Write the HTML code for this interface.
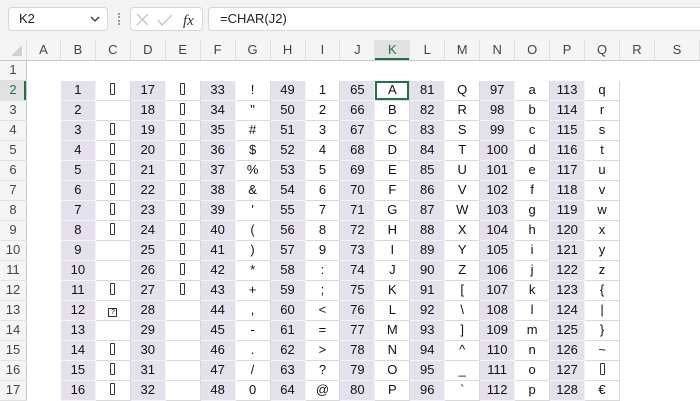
<!DOCTYPE html>
<html><head><style>
body{margin:0;width:700px;height:400px;overflow:hidden;background:#fff;font-family:"Liberation Sans",Arial,sans-serif;position:relative}
.top{position:absolute;left:0;top:0;width:700px;height:40px;background:#f3f3f3}
.nb{position:absolute;left:8px;top:7px;width:100px;height:24px;background:#fff;border:1px solid #d6d6d6;border-radius:4px;box-sizing:border-box;font-size:13px;line-height:22px;padding-left:10px;color:#222}
.fx{position:absolute;left:130px;top:7px;width:73px;height:24px;background:#fff;border:1px solid #d6d6d6;border-radius:4px;box-sizing:border-box}
.fb{position:absolute;left:208px;top:7px;width:500px;height:24px;background:#fff;border:1px solid #d6d6d6;border-radius:4px;box-sizing:border-box;font-size:13px;line-height:22px;padding-left:11px;color:#222}
table{position:absolute;left:0;top:40px;border-collapse:collapse;table-layout:fixed}
tr{height:20px}
td{height:19px;line-height:18px;padding:0;text-align:center;font-size:13px;color:#111;border:1px solid transparent;white-space:nowrap;overflow:hidden;box-sizing:border-box}
tr.h td{background:#f5f5f5;color:#444;font-size:13px;border:none;border-bottom:1px solid #c8c8c8;border-right:1px solid #e0e0e0}
td.rh{background:#f5f5f5;color:#444;border:none;border-right:1px solid #c8c8c8;border-bottom:1px solid #e0e0e0}
td.s{background:#e4e0ec;border:1px solid #f4f4f8}
td.w{background:#fff;border:1px solid #d9d9d9}
td.sel{box-shadow:inset 0 0 0 2px #217346}
.b{display:inline-block;width:3px;height:10px;border:1px solid #333;border-radius:1px;vertical-align:-1px}
.q{display:inline-block;width:7px;height:7px;border:1px solid #333;font-size:7px;line-height:7px;vertical-align:0}
</style></head><body>
<div class="top">
<div class="nb">K2<svg style="position:absolute;right:7px;top:8px" width="10" height="7"><path d="M1 1l4 4 4-4" stroke="#333" fill="none" stroke-width="1.3"/></svg></div>
<div style="position:absolute;left:118px;top:13px;width:2px;height:12px;border-left:2px dotted #999"></div>
<div class="fx"><svg width="73" height="24"><path d="M6 6l11 11M17 6L6 17" stroke="#bbb" stroke-width="1.2"/><path d="M27 12l4 5 10-10" stroke="#bbb" stroke-width="1.2" fill="none"/><text x="52" y="17" font-family="Liberation Serif" font-style="italic" font-size="15" fill="#333">fx</text></svg></div>
<div class="fb">=CHAR(J2)</div>
</div>
<table>
<colgroup><col style="width:26px"><col style="width:34px"><col span="17" style="width:35px"><col style="width:45px"></colgroup>
<tr class="h"><td style="background:#f5f5f5"><svg style="display:block" width="26" height="18"><path d="M22 4L22 15L11 15Z" fill="#d0d0d0"/></svg></td><td>A</td><td>B</td><td>C</td><td>D</td><td>E</td><td>F</td><td>G</td><td>H</td><td>I</td><td>J</td><td style="background:#e1e1e1;color:#217346;box-shadow:inset 0 -2px #217346">K</td><td>L</td><td>M</td><td>N</td><td>O</td><td>P</td><td>Q</td><td>R</td><td>S</td></tr>
<tr><td class="rh">1</td><td colspan="19"></td></tr>
<tr><td class="rh" style="background:#e1e1e1;color:#217346;box-shadow:inset -2px 0 #217346">2</td><td></td><td class="s">1</td><td class="w"><i class="b"></i></td><td class="s">17</td><td class="w"><i class="b"></i></td><td class="s">33</td><td class="w">!</td><td class="s">49</td><td class="w">1</td><td class="s">65</td><td class="w sel">A</td><td class="s">81</td><td class="w">Q</td><td class="s">97</td><td class="w">a</td><td class="s">113</td><td class="w">q</td><td></td><td></td></tr>
<tr><td class="rh">3</td><td></td><td class="s">2</td><td class="w"></td><td class="s">18</td><td class="w"><i class="b"></i></td><td class="s">34</td><td class="w">"</td><td class="s">50</td><td class="w">2</td><td class="s">66</td><td class="w">B</td><td class="s">82</td><td class="w">R</td><td class="s">98</td><td class="w">b</td><td class="s">114</td><td class="w">r</td><td></td><td></td></tr>
<tr><td class="rh">4</td><td></td><td class="s">3</td><td class="w"><i class="b"></i></td><td class="s">19</td><td class="w"><i class="b"></i></td><td class="s">35</td><td class="w">#</td><td class="s">51</td><td class="w">3</td><td class="s">67</td><td class="w">C</td><td class="s">83</td><td class="w">S</td><td class="s">99</td><td class="w">c</td><td class="s">115</td><td class="w">s</td><td></td><td></td></tr>
<tr><td class="rh">5</td><td></td><td class="s">4</td><td class="w"><i class="b"></i></td><td class="s">20</td><td class="w"><i class="b"></i></td><td class="s">36</td><td class="w">$</td><td class="s">52</td><td class="w">4</td><td class="s">68</td><td class="w">D</td><td class="s">84</td><td class="w">T</td><td class="s">100</td><td class="w">d</td><td class="s">116</td><td class="w">t</td><td></td><td></td></tr>
<tr><td class="rh">6</td><td></td><td class="s">5</td><td class="w"><i class="b"></i></td><td class="s">21</td><td class="w"><i class="b"></i></td><td class="s">37</td><td class="w">%</td><td class="s">53</td><td class="w">5</td><td class="s">69</td><td class="w">E</td><td class="s">85</td><td class="w">U</td><td class="s">101</td><td class="w">e</td><td class="s">117</td><td class="w">u</td><td></td><td></td></tr>
<tr><td class="rh">7</td><td></td><td class="s">6</td><td class="w"><i class="b"></i></td><td class="s">22</td><td class="w"><i class="b"></i></td><td class="s">38</td><td class="w">&amp;</td><td class="s">54</td><td class="w">6</td><td class="s">70</td><td class="w">F</td><td class="s">86</td><td class="w">V</td><td class="s">102</td><td class="w">f</td><td class="s">118</td><td class="w">v</td><td></td><td></td></tr>
<tr><td class="rh">8</td><td></td><td class="s">7</td><td class="w"><i class="b"></i></td><td class="s">23</td><td class="w"><i class="b"></i></td><td class="s">39</td><td class="w">'</td><td class="s">55</td><td class="w">7</td><td class="s">71</td><td class="w">G</td><td class="s">87</td><td class="w">W</td><td class="s">103</td><td class="w">g</td><td class="s">119</td><td class="w">w</td><td></td><td></td></tr>
<tr><td class="rh">9</td><td></td><td class="s">8</td><td class="w"><i class="b"></i></td><td class="s">24</td><td class="w"><i class="b"></i></td><td class="s">40</td><td class="w">(</td><td class="s">56</td><td class="w">8</td><td class="s">72</td><td class="w">H</td><td class="s">88</td><td class="w">X</td><td class="s">104</td><td class="w">h</td><td class="s">120</td><td class="w">x</td><td></td><td></td></tr>
<tr><td class="rh">10</td><td></td><td class="s">9</td><td class="w"></td><td class="s">25</td><td class="w"><i class="b"></i></td><td class="s">41</td><td class="w">)</td><td class="s">57</td><td class="w">9</td><td class="s">73</td><td class="w">I</td><td class="s">89</td><td class="w">Y</td><td class="s">105</td><td class="w">i</td><td class="s">121</td><td class="w">y</td><td></td><td></td></tr>
<tr><td class="rh">11</td><td></td><td class="s">10</td><td class="w"></td><td class="s">26</td><td class="w"><i class="b"></i></td><td class="s">42</td><td class="w">*</td><td class="s">58</td><td class="w">:</td><td class="s">74</td><td class="w">J</td><td class="s">90</td><td class="w">Z</td><td class="s">106</td><td class="w">j</td><td class="s">122</td><td class="w">z</td><td></td><td></td></tr>
<tr><td class="rh">12</td><td></td><td class="s">11</td><td class="w"><i class="b"></i></td><td class="s">27</td><td class="w"><i class="b"></i></td><td class="s">43</td><td class="w">+</td><td class="s">59</td><td class="w">;</td><td class="s">75</td><td class="w">K</td><td class="s">91</td><td class="w">[</td><td class="s">107</td><td class="w">k</td><td class="s">123</td><td class="w">{</td><td></td><td></td></tr>
<tr><td class="rh">13</td><td></td><td class="s">12</td><td class="w"><i class="q">?</i></td><td class="s">28</td><td class="w"></td><td class="s">44</td><td class="w">,</td><td class="s">60</td><td class="w">&lt;</td><td class="s">76</td><td class="w">L</td><td class="s">92</td><td class="w">\</td><td class="s">108</td><td class="w">l</td><td class="s">124</td><td class="w">|</td><td></td><td></td></tr>
<tr><td class="rh">14</td><td></td><td class="s">13</td><td class="w"></td><td class="s">29</td><td class="w"></td><td class="s">45</td><td class="w">-</td><td class="s">61</td><td class="w">=</td><td class="s">77</td><td class="w">M</td><td class="s">93</td><td class="w">]</td><td class="s">109</td><td class="w">m</td><td class="s">125</td><td class="w">}</td><td></td><td></td></tr>
<tr><td class="rh">15</td><td></td><td class="s">14</td><td class="w"><i class="b"></i></td><td class="s">30</td><td class="w"></td><td class="s">46</td><td class="w">.</td><td class="s">62</td><td class="w">&gt;</td><td class="s">78</td><td class="w">N</td><td class="s">94</td><td class="w">^</td><td class="s">110</td><td class="w">n</td><td class="s">126</td><td class="w">~</td><td></td><td></td></tr>
<tr><td class="rh">16</td><td></td><td class="s">15</td><td class="w"><i class="b"></i></td><td class="s">31</td><td class="w"></td><td class="s">47</td><td class="w">/</td><td class="s">63</td><td class="w">?</td><td class="s">79</td><td class="w">O</td><td class="s">95</td><td class="w">_</td><td class="s">111</td><td class="w">o</td><td class="s">127</td><td class="w"><i class="b"></i></td><td></td><td></td></tr>
<tr><td class="rh">17</td><td></td><td class="s">16</td><td class="w"><i class="b"></i></td><td class="s">32</td><td class="w"></td><td class="s">48</td><td class="w">0</td><td class="s">64</td><td class="w">@</td><td class="s">80</td><td class="w">P</td><td class="s">96</td><td class="w">`</td><td class="s">112</td><td class="w">p</td><td class="s">128</td><td class="w">€</td><td></td><td></td></tr>
</table>
</body></html>
